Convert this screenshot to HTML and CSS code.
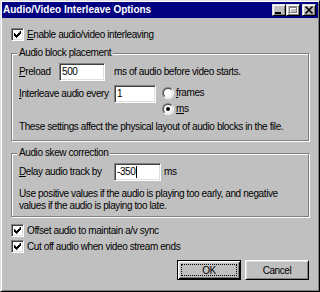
FILE: index.html
```html
<!DOCTYPE html>
<html lang="en">

<head>
    <meta charset="UTF-8">
    <meta name="viewport" content="width=device-width, initial-scale=1.0">
    <title>Audio/Video Interleave Options</title>
    <link rel="stylesheet" href="styles.css">
</head>

<body>
<div class="window">
    <div class="titlebar">
        <span class="title">Audio/Video Interleave Options</span>
        <div class="caption">
            <span class="cbtn">
                <svg width="12" height="10" viewBox="0 0 12 10"><rect x="2" y="7" width="6" height="2" fill="#000"/></svg>
            </span>
            <span class="cbtn">
                <svg width="12" height="10" viewBox="0 0 12 10">
                    <g fill="#fff" transform="translate(1 1)">
                        <rect x="2" y="1" width="8" height="2"/><rect x="2" y="3" width="1" height="4"/>
                        <rect x="9" y="3" width="1" height="4"/><rect x="2" y="7" width="8" height="1"/>
                    </g>
                    <g fill="#808080">
                        <rect x="2" y="1" width="8" height="2"/><rect x="2" y="3" width="1" height="4"/>
                        <rect x="9" y="3" width="1" height="4"/><rect x="2" y="7" width="8" height="1"/>
                    </g>
                </svg>
            </span>
            <span class="cbtn close">
                <svg width="12" height="10" viewBox="0 0 12 10"><path d="M2.5 1.5L9.5 8.5M9.5 1.5L2.5 8.5" stroke="#000" stroke-width="1.7"/></svg>
            </span>
        </div>
    </div>

    <div class="content">
        <div class="check first">
            <span class="box"><svg width="7" height="7" viewBox="0 0 7 7"><path d="M6 0h1v3h-1v1h-1v1h-1v1h-1v1h-1v-1h-1v-1h-1v-3h1v1h1v1h1v-1h1v-1h1z" fill="#000"/></svg></span>
            <span><u>E</u>nable audio/video interleaving</span>
        </div>

        <div class="group g1">
            <span class="legend">Audio block placement</span>
            <div class="row">
                <span class="lbl short"><u>P</u>reload</span>
                <span class="field w-preload">500</span>
                <span class="after">ms of audio before video starts.</span>
            </div>
            <div class="row interleave">
                <span class="lbl"><u>I</u>nterleave audio every</span>
                <span class="field w-every">1</span>
                <div class="radios">
                    <div class="radio"><span class="ring"><span class="ring-in"></span></span><span><u>f</u>rames</span></div>
                    <div class="radio"><span class="ring"><span class="ring-in"><span class="dot"></span></span></span><span><u>m</u>s</span></div>
                </div>
            </div>
            <p class="note">These settings affect the physical layout of audio blocks in the file.</p>
        </div>

        <div class="group g2">
            <span class="legend">Audio skew correction</span>
            <div class="row">
                <span class="lbl"><u>D</u>elay audio track by</span>
                <span class="field w-delay">-350<span class="caret"></span></span>
                <span class="unit">ms</span>
            </div>
            <p class="note two">Use positive values if the audio is playing too early, and negative<br>values if the audio is playing too late.</p>
        </div>

        <div class="check second">
            <span class="box"><svg width="7" height="7" viewBox="0 0 7 7"><path d="M6 0h1v3h-1v1h-1v1h-1v1h-1v1h-1v-1h-1v-1h-1v-3h1v1h1v1h1v-1h1v-1h1z" fill="#000"/></svg></span>
            <span>Offset audio to maintain a/v sync</span>
        </div>
        <div class="check">
            <span class="box"><svg width="7" height="7" viewBox="0 0 7 7"><path d="M6 0h1v3h-1v1h-1v1h-1v1h-1v1h-1v-1h-1v-1h-1v-3h1v1h1v1h1v-1h1v-1h1z" fill="#000"/></svg></span>
            <span>Cut off audio when video stream ends</span>
        </div>

        <div class="buttons">
            <span class="btn default"><span class="focus">OK</span></span>
            <span class="btn">Cancel</span>
        </div>
    </div>
</div>
</body>

</html>
```

FILE: styles.css
```css
body,
html {
    margin: 0;
    padding: 0;
    background: #c0c0c0;
}

.window {
    width: 320px;
    height: 292px;
    box-sizing: border-box;
    background: #c0c0c0;
    border: 1px solid;
    border-color: #dfdfdf #000 #000 #dfdfdf;
    box-shadow: inset 1px 1px #fff, inset -1px -1px #808080;
    padding: 1px;
    font-family: "Liberation Sans", Arial, sans-serif;
    font-size: 10px;
    letter-spacing: -0.4px;
    white-space: nowrap;
    color: #000;
    display: flex;
    flex-direction: column;
    overflow: hidden;
}

.titlebar {
    height: 16px;
    flex: none;
    background: #000080;
    display: flex;
    align-items: center;
    justify-content: space-between;
    padding-left: 1px;
}

.title {
    font-weight: bold;
    letter-spacing: 0;
    color: #fff;
    line-height: 16px;
}

.caption {
    display: flex;
    padding-right: 2px;
}

.cbtn {
    width: 14px;
    height: 12px;
    box-sizing: border-box;
    border: 1px solid;
    border-color: #dfdfdf #000 #000 #dfdfdf;
    box-shadow: inset 1px 1px #fff, inset -1px -1px #808080;
    background: #c0c0c0;
    display: flex;
}

.cbtn.close {
    margin-left: 2px;
}

.content {
    display: flex;
    flex-direction: column;
    padding: 0 9px;
}

u {
    text-decoration: underline;
    text-underline-offset: 1px;
}

.check {
    height: 16px;
    flex: none;
    display: flex;
    align-items: center;
    gap: 3px;
}

.check.first {
    margin-top: 8px;
}

.check.second {
    margin-top: 5px;
}

.box {
    width: 13px;
    height: 13px;
    flex: none;
    box-sizing: border-box;
    border: 1px solid;
    border-color: #808080 #fff #fff #808080;
    box-shadow: inset 1px 1px #404040, inset -1px -1px #dfdfdf;
    background: #fff;
    display: flex;
    align-items: center;
    justify-content: center;
}

.group {
    flex: none;
    display: flex;
    flex-direction: column;
    border: 1px solid #808080;
    box-shadow: inset 1px 1px #fff, 1px 1px #fff;
    padding: 0 7px 7px 7px;
}

.g1 {
    margin-top: 11px;
}

.g2 {
    margin-top: 12px;
    padding-bottom: 4px;
}

.legend {
    align-self: flex-start;
    margin: -7px 0 4px -2px;
    padding: 0 2px;
    line-height: 12px;
    background: #c0c0c0;
}

.row {
    display: flex;
    align-items: flex-start;
    line-height: 18px;
}

.interleave {
    margin-top: 4px;
}

.lbl {
    width: 95px;
    flex: none;
}

.lbl.short {
    width: 40px;
}

.field {
    height: 18px;
    flex: none;
    box-sizing: border-box;
    border: 1px solid;
    border-color: #808080 #fff #fff #808080;
    box-shadow: inset 1px 1px #404040, inset -1px -1px #dfdfdf;
    background: #fff;
    padding-left: 2px;
    line-height: 16px;
    display: flex;
    align-items: center;
}

.w-preload {
    width: 46px;
}

.w-every {
    width: 42px;
}

.w-delay {
    width: 47px;
}

.caret {
    width: 1px;
    height: 12px;
    margin-left: 1px;
    background: #000;
}

.after {
    margin-left: 9px;
}

.unit {
    margin-left: 3px;
}

.radios {
    display: flex;
    flex-direction: column;
    margin-left: 6px;
}

.radio {
    height: 16px;
    display: flex;
    align-items: center;
    gap: 2px;
}

.ring {
    width: 12px;
    height: 12px;
    flex: none;
    box-sizing: border-box;
    border-radius: 50%;
    border: 1px solid;
    border-color: #808080 #fff #fff #808080;
    display: flex;
}

.ring-in {
    flex: 1;
    border-radius: 50%;
    border: 1px solid;
    border-color: #404040 #dfdfdf #dfdfdf #404040;
    background: #fff;
    display: flex;
    align-items: center;
    justify-content: center;
}

.dot {
    width: 4px;
    height: 4px;
    border-radius: 50%;
    background: #000;
}

.note {
    margin: 4px 0 0 0;
    line-height: 12px;
}

.note.two {
    margin-top: 7px;
}

.buttons {
    display: flex;
    justify-content: flex-end;
    gap: 4px;
    margin-top: 6px;
}

.btn {
    width: 64px;
    height: 20px;
    box-sizing: border-box;
    border: 1px solid;
    border-color: #fff #000 #000 #fff;
    box-shadow: inset 1px 1px #dfdfdf, inset -1px -1px #808080;
    display: flex;
    align-items: center;
    justify-content: center;
}

.btn.default {
    border-color: #000;
    box-shadow: inset 1px 1px #fff, inset -1px -1px #000, inset 2px 2px #dfdfdf, inset -2px -2px #808080;
    padding: 3px;
}

.focus {
    flex: 1;
    align-self: stretch;
    border: 1px dotted #000;
    display: flex;
    align-items: center;
    justify-content: center;
}
```
